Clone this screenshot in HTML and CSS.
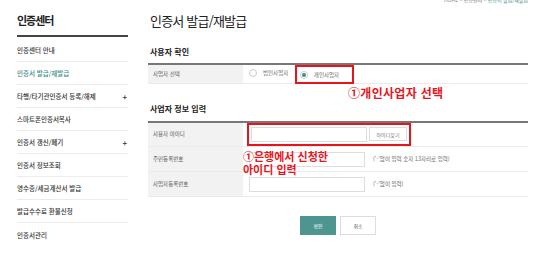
FILE: index.html
```html
<!DOCTYPE html>
<html lang="ko">
<head>
  <meta charset="UTF-8">
  <meta name="viewport" content="width=device-width, initial-scale=1.0">
  <link rel="stylesheet" href="styles.css">
  <title>인증서 발급/재발급</title>
</head>
<body>
<div class="page">
  <aside class="side">
    <h2 class="side-title">인증센터</h2>
    <ul class="menu">
      <li>인증센터 안내</li>
      <li class="on">인증서 발급/재발급</li>
      <li>타행/타기관인증서 등록/해제<span class="plus">+</span></li>
      <li>스마트폰인증서복사</li>
      <li>인증서 갱신/폐기<span class="plus">+</span></li>
      <li>인증서 정보조회</li>
      <li>영수증/세금계산서 발급</li>
      <li>발급수수료 환불신청</li>
      <li>인증서관리</li>
    </ul>
  </aside>

  <main class="main">
    <div class="crumb">HOME &gt; 인증센터 &gt; <em>인증서 발급/재발급</em></div>
    <h1 class="title">인증서 발급/재발급</h1>

    <section class="sec sec-user">
      <h3>사용자 확인</h3>
      <table class="form">
        <tr class="row-short">
          <th>사업자 선택</th>
          <td>
            <label class="radio"><i class="dot"></i>법인사업자</label>
            <label class="radio mark"><i class="dot checked"></i>개인사업자</label>
          </td>
        </tr>
      </table>
      <p class="note note-type">①개인사업자 선택</p>
    </section>

    <section class="sec sec-info">
      <h3>사업자 정보 입력</h3>
      <table class="form">
        <tr>
          <th>사용자 아이디</th>
          <td class="td-mark">
            <span class="mark id-box"><input type="text" class="inp"><button class="btn-find">아이디찾기</button></span>
          </td>
        </tr>
        <tr>
          <th>주민등록번호</th>
          <td><input type="text" class="inp"><span class="hint">('-'없이 입력 숫자 13자리로 입력)</span></td>
        </tr>
        <tr>
          <th>사업자등록번호</th>
          <td><input type="text" class="inp"><span class="hint">('-'없이 입력)</span></td>
        </tr>
      </table>
      <p class="note note-id">①은행에서 신청한<br>아이디 입력</p>
    </section>

    <div class="actions">
      <button class="btn ok">확인</button>
      <button class="btn">취소</button>
    </div>
  </main>
</div>
</body>
</html>
```

FILE: styles.css
```css
* {
  box-sizing: border-box;
}
body {
  margin: 0;
  font-family: "Noto Sans CJK KR", "Noto Sans", sans-serif;
  color: #333;
  background: #fff;
  overflow: hidden;
}
.page {
  display: flex;
  padding-left: 17px;
}

/* left menu */
.side {
  width: 111px;
  flex-shrink: 0;
}
.side-title {
  margin: 13px 0 0;
  font-size: 11px;
  line-height: 14px;
  letter-spacing: -1px;
  font-weight: bold;
  color: #222;
  padding-bottom: 8px;
  border-bottom: 2px solid #444;
}
.menu {
  list-style: none;
  margin: 0;
  padding: 2px 0 0;
}
.menu li {
  display: flex;
  justify-content: space-between;
  align-items: center;
  height: 23px;
  border-bottom: 1px solid #ececec;
  font-size: 6.5px;
  font-weight: 500;
  color: #333;
}
.menu li:last-child {
  border-bottom: none;
}
.menu li.on {
  color: #3b8d85;
}
.plus {
  font-size: 8px;
  padding-right: 1px;
  color: #333;
}

/* content */
.main {
  margin-left: 20px;
  width: 380px;
}
.crumb {
  margin-top: -3px;
  height: 6px;
  line-height: 6px;
  font-size: 5px;
  color: #777;
  text-align: right;
}
.crumb em {
  font-style: normal;
  color: #3b8d85;
}
.title {
  margin: 10px 0 0 2px;
  font-size: 13px;
  line-height: 16px;
  letter-spacing: -0.8px;
  font-weight: normal;
  color: #222;
}
.sec {
  position: relative;
}
.sec h3 {
  margin: 0 0 0 2px;
  font-size: 8px;
  line-height: 10px;
  font-weight: bold;
  color: #222;
}
.sec-user {
  margin-top: 18px;
}
.sec-user h3 {
  margin-bottom: 6px;
}
.sec-info {
  margin-top: 20px;
}
.sec-info h3 {
  margin-bottom: 7px;
}
.form {
  width: 100%;
  border-collapse: collapse;
  border-top: 2px solid #777;
}
.form tr {
  height: 25px;
  border-bottom: 1px solid #ebebeb;
}
.form tr.row-short {
  height: 19px;
}
.form th {
  width: 95px;
  background: #f2f2f2;
  font-size: 5.5px;
  font-weight: normal;
  text-align: left;
  padding: 0 0 0 5px;
  color: #555;
}
.form td {
  padding: 0 0 0 6px;
  font-size: 5.5px;
  color: #666;
}
.radio {
  display: inline-flex;
  align-items: center;
  height: 15px;
  font-size: 5.5px;
  color: #666;
  margin-left: 0;
  margin-right: 7px;
}
.dot {
  width: 8px;
  height: 8px;
  border: 1px solid #ccc;
  border-radius: 50%;
  margin-right: 6px;
  display: inline-flex;
  align-items: center;
  justify-content: center;
}
.dot.checked::after {
  content: "";
  width: 4px;
  height: 4px;
  border-radius: 50%;
  background: #3b8d85;
}
.mark {
  outline: 2px solid #e8141c;
}
.radio.mark {
  padding: 0 13px 0 3px;
}
.td-mark {
  padding-left: 4px;
}
.id-box {
  display: inline-flex;
  align-items: center;
  padding: 2px;
}
.inp {
  width: 116px;
  height: 15px;
  border: 1px solid #ddd;
  padding: 0;
  margin: 0;
  vertical-align: middle;
}
.btn-find {
  margin-left: 2px;
  width: 38px;
  height: 14px;
  border: 1px solid #ddd;
  background: #fff;
  font-family: inherit;
  font-size: 5px;
  color: #777;
  padding: 0;
}
.hint {
  margin-left: 8px;
  vertical-align: middle;
  font-size: 5.5px;
  color: #666;
}
.note {
  position: absolute;
  margin: 0;
  color: #e8141c;
  font-weight: bold;
}
.note-type {
  left: 200px;
  top: 39px;
  font-size: 12px;
  line-height: 14px;
  letter-spacing: 0.3px;
}
.note-id {
  left: 95px;
  top: 46px;
  font-size: 11px;
  line-height: 13px;
}
.actions {
  display: flex;
  justify-content: center;
  gap: 4px;
  margin-top: 19px;
}
.btn {
  width: 36px;
  height: 19px;
  border: 1px solid #ddd;
  background: #fff;
  font-family: inherit;
  font-size: 5px;
  color: #555;
  padding: 0;
}
.btn.ok {
  background: #4c968f;
  border-color: #4c968f;
  color: #fff;
}
```
